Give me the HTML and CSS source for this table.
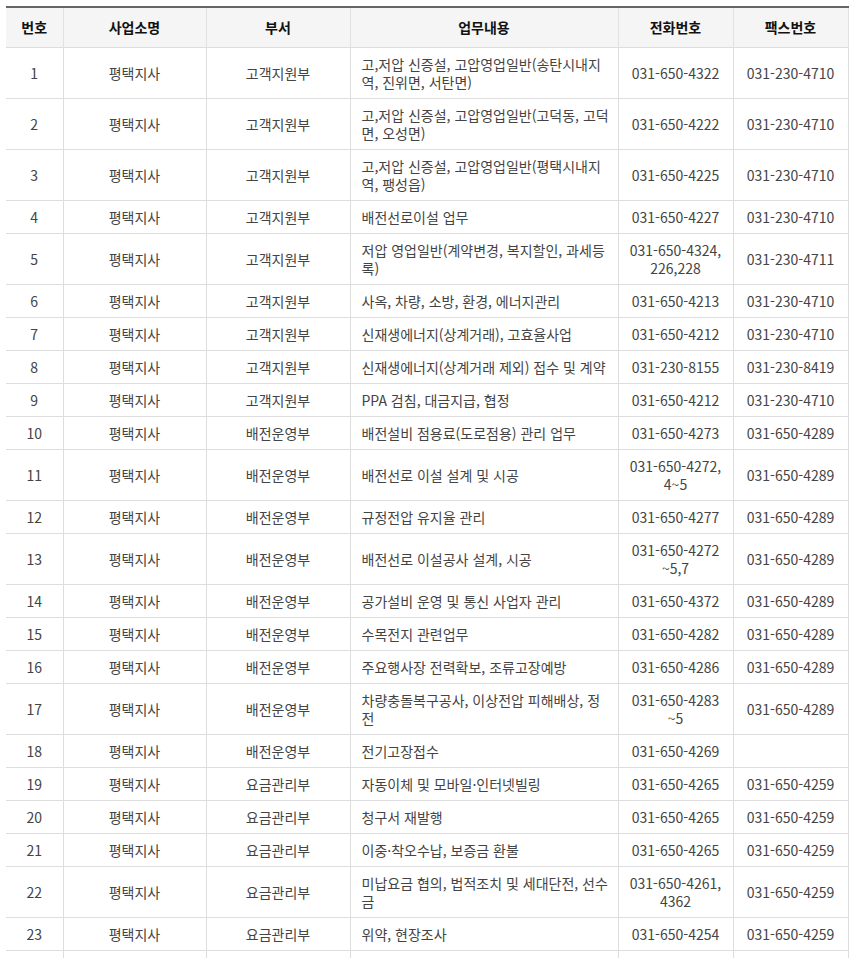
FILE: index.html
```html
<!DOCTYPE html>
<html lang="ko">
<head>
<meta charset="utf-8">
<title>사업소 업무안내</title>
<link rel="stylesheet" href="styles.css">
</head>
<body>
<table class="tbl">
  <colgroup>
    <col class="c-no"><col class="c-office"><col class="c-dept"><col class="c-task"><col class="c-tel"><col class="c-fax"><col class="c-extra">
  </colgroup>
  <thead>
    <tr><th>번호</th><th>사업소명</th><th>부서</th><th>업무내용</th><th>전화번호</th><th>팩스번호</th><th></th></tr>
  </thead>
  <tbody>
    <tr><td>1</td><td>평택지사</td><td>고객지원부</td><td class="task">고,저압 신증설, 고압영업일반(송탄시내지역, 진위면, 서탄면)</td><td>031-650-4322</td><td>031-230-4710</td><td></td></tr>
    <tr><td>2</td><td>평택지사</td><td>고객지원부</td><td class="task">고,저압 신증설, 고압영업일반(고덕동, 고덕면, 오성면)</td><td>031-650-4222</td><td>031-230-4710</td><td></td></tr>
    <tr><td>3</td><td>평택지사</td><td>고객지원부</td><td class="task">고,저압 신증설, 고압영업일반(평택시내지역, 팽성읍)</td><td>031-650-4225</td><td>031-230-4710</td><td></td></tr>
    <tr><td>4</td><td>평택지사</td><td>고객지원부</td><td class="task">배전선로이설 업무</td><td>031-650-4227</td><td>031-230-4710</td><td></td></tr>
    <tr><td>5</td><td>평택지사</td><td>고객지원부</td><td class="task">저압 영업일반(계약변경, 복지할인, 과세등록)</td><td>031-650-4324,<br>226,228</td><td>031-230-4711</td><td></td></tr>
    <tr><td>6</td><td>평택지사</td><td>고객지원부</td><td class="task">사옥, 차량, 소방, 환경, 에너지관리</td><td>031-650-4213</td><td>031-230-4710</td><td></td></tr>
    <tr><td>7</td><td>평택지사</td><td>고객지원부</td><td class="task">신재생에너지(상계거래), 고효율사업</td><td>031-650-4212</td><td>031-230-4710</td><td></td></tr>
    <tr><td>8</td><td>평택지사</td><td>고객지원부</td><td class="task">신재생에너지(상계거래 제외) 접수 및 계약</td><td>031-230-8155</td><td>031-230-8419</td><td></td></tr>
    <tr><td>9</td><td>평택지사</td><td>고객지원부</td><td class="task">PPA 검침, 대금지급, 협정</td><td>031-650-4212</td><td>031-230-4710</td><td></td></tr>
    <tr><td>10</td><td>평택지사</td><td>배전운영부</td><td class="task">배전설비 점용료(도로점용) 관리 업무</td><td>031-650-4273</td><td>031-650-4289</td><td></td></tr>
    <tr><td>11</td><td>평택지사</td><td>배전운영부</td><td class="task">배전선로 이설 설계 및 시공</td><td>031-650-4272,<br>4~5</td><td>031-650-4289</td><td></td></tr>
    <tr><td>12</td><td>평택지사</td><td>배전운영부</td><td class="task">규정전압 유지율 관리</td><td>031-650-4277</td><td>031-650-4289</td><td></td></tr>
    <tr><td>13</td><td>평택지사</td><td>배전운영부</td><td class="task">배전선로 이설공사 설계, 시공</td><td>031-650-4272<br>~5,7</td><td>031-650-4289</td><td></td></tr>
    <tr><td>14</td><td>평택지사</td><td>배전운영부</td><td class="task">공가설비 운영 및 통신 사업자 관리</td><td>031-650-4372</td><td>031-650-4289</td><td></td></tr>
    <tr><td>15</td><td>평택지사</td><td>배전운영부</td><td class="task">수목전지 관련업무</td><td>031-650-4282</td><td>031-650-4289</td><td></td></tr>
    <tr><td>16</td><td>평택지사</td><td>배전운영부</td><td class="task">주요행사장 전력확보, 조류고장예방</td><td>031-650-4286</td><td>031-650-4289</td><td></td></tr>
    <tr><td>17</td><td>평택지사</td><td>배전운영부</td><td class="task">차량충돌복구공사, 이상전압 피해배상, 정전</td><td>031-650-4283<br>~5</td><td>031-650-4289</td><td></td></tr>
    <tr><td>18</td><td>평택지사</td><td>배전운영부</td><td class="task">전기고장접수</td><td>031-650-4269</td><td></td><td></td></tr>
    <tr><td>19</td><td>평택지사</td><td>요금관리부</td><td class="task">자동이체 및 모바일·인터넷빌링</td><td>031-650-4265</td><td>031-650-4259</td><td></td></tr>
    <tr><td>20</td><td>평택지사</td><td>요금관리부</td><td class="task">청구서 재발행</td><td>031-650-4265</td><td>031-650-4259</td><td></td></tr>
    <tr><td>21</td><td>평택지사</td><td>요금관리부</td><td class="task">이중·착오수납, 보증금 환불</td><td>031-650-4265</td><td>031-650-4259</td><td></td></tr>
    <tr><td>22</td><td>평택지사</td><td>요금관리부</td><td class="task">미납요금 협의, 법적조치 및 세대단전, 선수금</td><td>031-650-4261,<br>4362</td><td>031-650-4259</td><td></td></tr>
    <tr><td>23</td><td>평택지사</td><td>요금관리부</td><td class="task">위약, 현장조사</td><td>031-650-4254</td><td>031-650-4259</td><td></td></tr>
    <tr><td>24</td><td>평택지사</td><td>요금관리부</td><td class="task">전기요금 상담</td><td>031-650-4254</td><td>031-650-4259</td><td></td></tr>
  </tbody>
</table>
</body>
</html>
```

FILE: styles.css
```css
html {
  overflow: hidden;
}
body {
  margin: 6px;
  font-family: "Noto Sans CJK KR", "Noto Sans", sans-serif;
  font-size: 14px;
  color: #444;
  background: #fff;
}
.tbl {
  border-collapse: collapse;
  table-layout: fixed;
  width: 942px;
  border-top: 2px solid #666;
}
.c-no { width: 57px; }
.c-office { width: 143px; }
.c-dept { width: 144px; }
.c-task { width: 268px; }
.c-tel { width: 115px; }
.c-fax { width: 115px; }
.c-extra { width: 100px; }
.tbl th {
  height: 40px;
  padding: 0 8px;
  box-sizing: border-box;
  background: #f5f5f5;
  color: #111;
  font-weight: 700;
  font-size: 14px;
  line-height: 18px;
  text-align: center;
  vertical-align: middle;
  border-left: 1px solid #e2e2e2;
  border-right: 1px solid #e2e2e2;
}
.tbl th:first-child { border-left: none; }
.tbl td {
  padding: 7px 8px;
  line-height: 18px;
  text-align: center;
  vertical-align: middle;
  border: 1px solid #ddd;
  word-break: keep-all;
}
.tbl td:first-child { border-left: none; }
.tbl td.task {
  text-align: left;
  padding-left: 11px;
  padding-right: 5px;
  word-break: break-all;
}
```
